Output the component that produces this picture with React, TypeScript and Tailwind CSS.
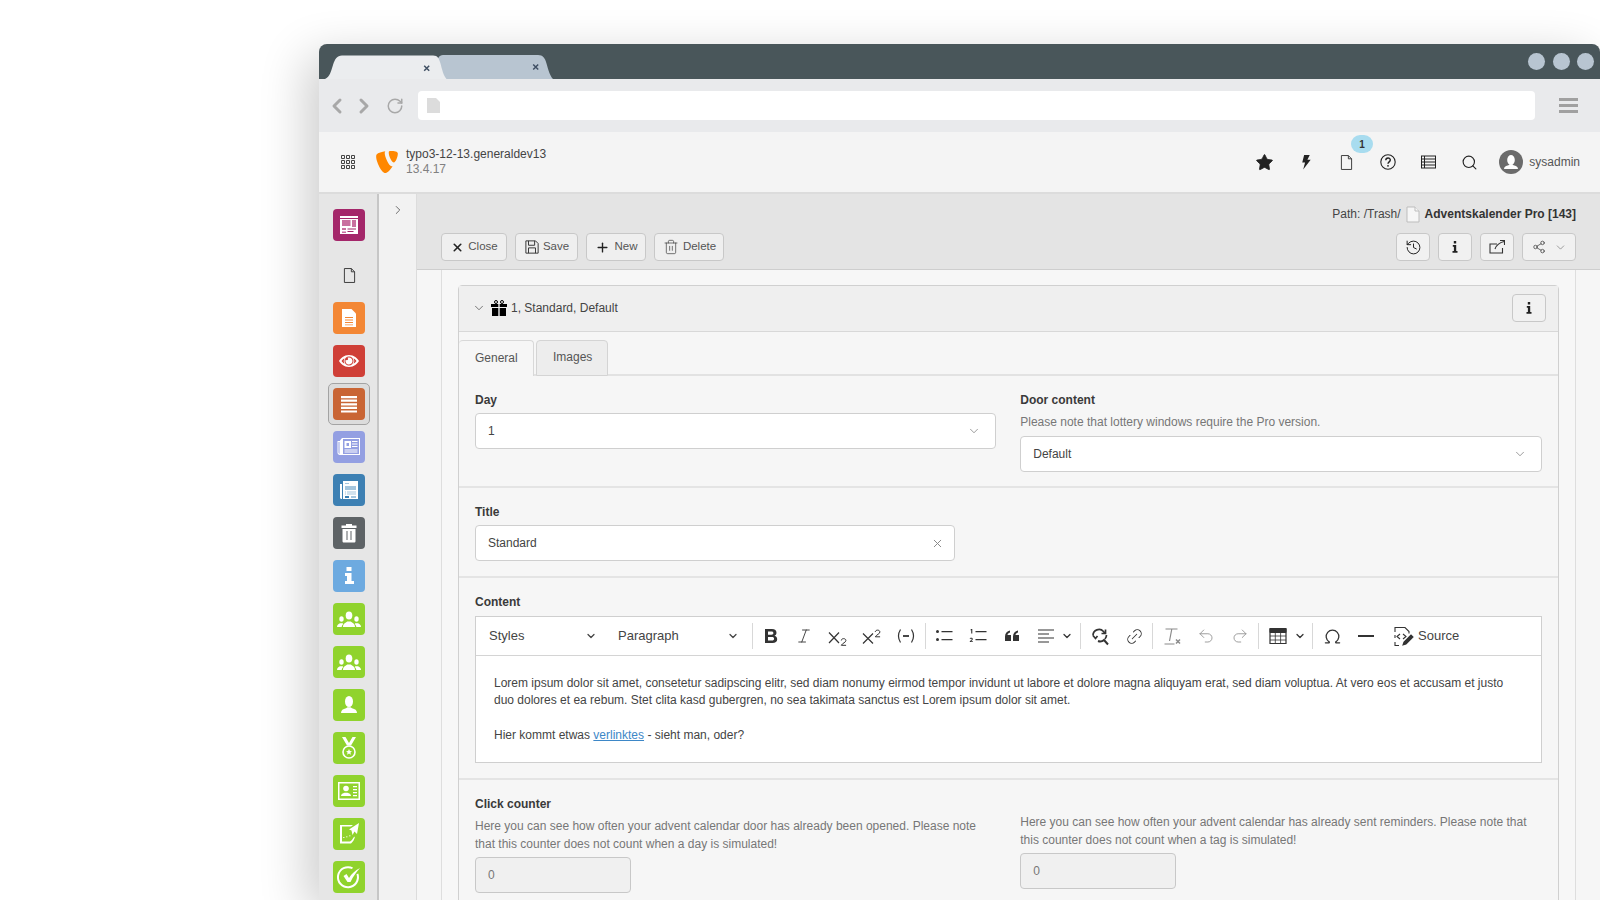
import React from 'react';
import { SiTypo3 } from 'react-icons/si';
import {
  Star, Search, X, Plus, Trash2, History, ChevronDown, ChevronRight, ChevronLeft, RotateCw, Share2,
  Italic, Undo2, Redo2, Omega, Link2,
} from 'lucide-react';

const Doc = ({ className = '', fill = 'none', stroke = 'currentColor' }: { className?: string; fill?: string; stroke?: string }) => (
  <svg viewBox="0 0 14 16" className={className} fill={fill} stroke={stroke} strokeWidth="1">
    <path d="M1.5 .5h7.5l3.5 3.5v11.500h-11z" />
    <path d="M9 .5v3.500h3.500" />
  </svg>
);

const Tile = ({ bg, children }: { bg: string; children: React.ReactNode }) => (
  <div className={`w-8 h-8 rounded-[4px] shrink-0 flex items-center justify-center ${bg}`}>
    <svg viewBox="0 0 32 32" className="w-8 h-8" fill="#fff">{children}</svg>
  </div>
);

const Group = () => (
  <>
    <ellipse cx="16" cy="12.500" rx="3.300" ry="4" />
    <path d="M10 24c0-3.500 2.500-4 4.300-5.500h3.400C19.500 20 22 20.500 22 24z" />
    <ellipse cx="8.500" cy="16" rx="2.200" ry="2.800" />
    <path d="M4 24c0-2.500 1.800-3 3-3.800h2.800l.4 1c-1 .7-1.400 1.700-1.500 2.800z" />
    <ellipse cx="23.500" cy="16" rx="2.200" ry="2.800" />
    <path d="M28 24c0-2.500-1.800-3-3-3.800h-2.800l-.4 1c1 .7 1.400 1.700 1.500 2.800z" />
  </>
);

const ModuleMenu = () => (
  <div className="w-[60px] shrink-0 bg-[#e6e6e6] border-r-2 border-[#c6c6c6] flex flex-col items-center pt-[15px] pl-[2px]">
    <Tile bg="bg-[#a4276a]">
      <path d="M7 7h18v18H7z" />
      <path d="M9 11h8.500v6H9zM19 11h4v7h-4zM9 19h4v2H9zM9 22.500h4V24H9z" fill="#c9709f" />
      <path d="M14.500 19.500h8.500v1h-8.500zM14.500 22h6v1h-6z" fill="#a4276a" />
      <path d="M7 9h18v1H7z" fill="#a4276a" />
    </Tile>
    <div className="h-8 w-8 mt-[18px] flex items-center justify-center">
      <Doc className="w-[13px] h-[15px] text-[#333]" />
    </div>
    <div className="mt-[11px]">
      <Tile bg="bg-[#f38735]">
        <path d="M9 7h9.500L23 11.500V25H9z" />
        <path d="M12 15h8v1h-8zM12 17.500h8v1h-8zM12 20h8v1h-8zM12 22.500h8v.8h-8z" fill="#f38735" />
      </Tile>
    </div>
    <div className="mt-[11px]">
      <Tile bg="bg-[#cf3f37]">
        <path fillRule="evenodd" d="M16 10c5 0 8.500 3.500 10 6-1.500 2.500-5 6-10 6S7.500 18.500 6 16c1.500-2.500 5-6 10-6zm0 1.500a4.500 4.500 0 100 9 4.500 4.500 0 000-9zm-7.500 4.500c.8 1 1.700 2 2.900 2.800a6 6 0 010-5.600c-1.200.8-2.100 1.800-2.900 2.800zm15 0c-.8-1-1.700-2-2.900-2.800a6 6 0 010 5.600c1.200-.8 2.100-1.800 2.900-2.800z" />
        <path d="M16 12.500a3.500 3.500 0 11-3.300 2.300c.6.700 2 .4 2.300-.2.300-.7-.1-1.500-.6-1.800.5-.2 1-.3 1.600-.3z" />
      </Tile>
    </div>
    <div className="mt-[6px] w-[42px] h-[42px] rounded-[5px] border border-[#a3a3a3] bg-[#dcdcdc] flex items-center justify-center">
      <Tile bg="bg-[#c96535]">
        <path d="M8 8h16v2.200H8zM8 11.600h16v2.200H8zM8 15.200h16v2.200H8zM8 18.800h16V21H8zM8 22.400h16v2.200H8z" />
      </Tile>
    </div>
    <div className="mt-[6px]">
      <Tile bg="bg-[#939fe2]">
        <path fillRule="evenodd" d="M9 7h18v17H7c-1.500 0-2.500-1-2.500-2.500V10H7v-.5zm1 1v15h16V8zM5.500 11v10.500c0 .6.400 1.200 1 1.400V11z" />
        <path d="M11.500 10h6.500v7h-6.500zM19 10h5.500v1H19zM19 12.500h5.500v1H19zM19 15h5.500v1H19zM11.500 18.500h13v1h-13zM11.500 20.500h13v1h-13z" />
        <path d="M13.500 12h2.500v3h-2.500z" fill="#939fe2" />
      </Tile>
    </div>
    <div className="mt-[11px]">
      <Tile bg="bg-[#3d80b3]">
        <path d="M10 7h15v18H10zM7 10h2v15c-1 0-2-.5-2-1.500z" />
        <path d="M12 9h4v1h-4zM12 12h11v4H12zM12 17.500h1v1h-1zM14 17.500h9v1h-9zM12 19.500h1v1h-1zM14 19.500h9v1h-9z" fill="#a4c5dd" />
        <path d="M12 22h4v2h-4z" fill="#3d80b3" />
        <path d="M18 22h5v2h-5z" fill="#a4c5dd" />
      </Tile>
    </div>
    <div className="mt-[11px]">
      <Tile bg="bg-[#5e6366]">
        <path d="M13 7h6v1.500h4.500V11h-15V8.500H13z" />
        <path fillRule="evenodd" d="M9.500 12h13v12c0 1-.5 1.500-1.500 1.500H11c-1 0-1.500-.5-1.500-1.500zm4 2v9h1v-9zm4 0v9h1v-9z" />
      </Tile>
    </div>
    <div className="mt-[11px]">
      <Tile bg="bg-[#6daae0]">
        <path d="M13.500 7h5v4h-5zM12 13h6.500v8H21v3H12v-3h2v-5h-2z" />
      </Tile>
    </div>
    <div className="mt-[11px]"><Tile bg="bg-[#90d32d]"><Group /></Tile></div>
    <div className="mt-[11px]"><Tile bg="bg-[#90d32d]"><Group /></Tile></div>
    <div className="mt-[11px]">
      <Tile bg="bg-[#90d32d]">
        <ellipse cx="16" cy="12.500" rx="4" ry="5.500" />
        <path d="M8 24c0-3 2-4 5-4.800l1.500-1h3l1.500 1c3 .8 5 1.800 5 4.800z" />
      </Tile>
    </div>
    <div className="mt-[11px]">
      <Tile bg="bg-[#90d32d]">
        <path d="M9 5h3.500l3.500 6 3.500-6H23l-5 8.500h-4z" />
        <circle cx="16" cy="20" r="6" fill="none" stroke="#fff" strokeWidth="1.600" />
        <path d="M16 17l.9 2 2.100.2-1.600 1.400.5 2.100-1.900-1.100-1.900 1.100.5-2.100-1.600-1.400 2.100-.2z" />
      </Tile>
    </div>
    <div className="mt-[11px]">
      <Tile bg="bg-[#90d32d]">
        <path fillRule="evenodd" d="M5 7h22v18H5zm1.500 1.500v15h19v-15z" />
        <circle cx="13" cy="13.500" r="2.800" />
        <path d="M8 21c0-2 2-2.500 3.500-3.200h3c1.500.7 3.500 1.200 3.500 3.200z" />
        <path d="M20 11h4v1.200h-4zM20 14h4v1.200h-4zM20 17h4v1.200h-4zM20 20h4v1.200h-4z" />
      </Tile>
    </div>
    <div className="mt-[11px]">
      <Tile bg="bg-[#90d32d]">
        <path d="M7 7h13l-2 1.500H9v15h8c1.500-1 2.500-2 3.500-4l1.500-1c-.5 3-2 5-4 7H7z" />
        <path d="M26 5l-2 11-2.500-2.500-2 3.500-1-4.500-2.500-1z" />
        <path d="M10 19h1.500v.8H10zM13 18.500h1.500v.8H13zM16 17.500h1.500v.8H16z" />
      </Tile>
    </div>
    <div className="mt-[11px]">
      <Tile bg="bg-[#90d32d]">
        <path d="M25.300 12.500A11 11 0 1120 6.500l-1 1.600a9 9 0 104.500 5.200z" />
        <path d="M10.500 15l3-2 2.500 4c2.500-4 6-7.500 11-10-3.500 4-7 8.500-9.500 14h-3z" />
      </Tile>
    </div>
  </div>
);

const TopBtn = ({ label, w, children }: { label: string; w: string; children: React.ReactNode }) => (
  <div className={`${w} h-[28px] rounded-[4px] border border-[#c8c8c8] bg-[#efefef] flex items-center justify-center gap-[4px] pl-[1px] text-[11.500px] text-[#555]`}>
    {children}
    <span>{label}</span>
  </div>
);

const IconBtn = ({ w = 'w-[34px]', children }: { w?: string; children: React.ReactNode }) => (
  <div className={`${w} h-[28px] rounded-[4px] border border-[#c8c8c8] bg-[#f1f1f1] flex items-center justify-center`}>
    {children}
  </div>
);

const InfoI = () => (
  <svg viewBox="0 0 16 16" className="w-4 h-4 text-[#222]" fill="currentColor">
    <path d="M6.800 2h2.400v2.400H6.800zM5.800 6h3.400v6h1.300v1.700H5.500V12h1.400V7.700H5.800z" />
  </svg>
);

const Sep = ({ ml }: { ml: string }) => <div className={`w-px h-[26px] bg-[#d8d8d8] shrink-0 ${ml}`} />;

const TB = ({ w = 'w-[34px]', ml = '', children }: { w?: string; ml?: string; children: React.ReactNode }) => (
  <div className={`h-full shrink-0 flex items-center justify-center text-[#333] ${w} ${ml}`}>{children}</div>
);

const Editor = () => (
  <div className="mt-[5px] border border-[#cfcfcf] bg-white h-[147px] w-full">
    <div className="h-[39px] border-b border-[#d4d4d4] flex items-center text-[13px] text-[#444]">
      <div className="w-[129px] h-full flex items-center justify-between pl-[13px] pr-[8px] shrink-0">
        <span>Styles</span><ChevronDown size={12} strokeWidth={2.500} />
      </div>
      <div className="w-[142px] h-full flex items-center justify-between pl-[13px] pr-[8px] shrink-0">
        <span>Paragraph</span><ChevronDown size={12} strokeWidth={2.500} />
      </div>
      <Sep ml="ml-[5px]" />
      <TB w="w-[33px]" ml="ml-[1px]">
        <svg viewBox="0 0 20 20" className="w-5 h-5" fill="currentColor" fillRule="evenodd">
          <path d="M4 3h7c3 0 4.500 1.500 4.500 3.800 0 1.500-.8 2.500-2 3 1.700.5 2.700 1.700 2.700 3.400 0 2.500-1.800 3.800-4.700 3.800H4zm3 2.500v3.300h3.500c1.200 0 1.900-.6 1.900-1.700s-.7-1.600-1.900-1.600zm0 5.500v3.500h4c1.300 0 2.100-.6 2.100-1.800s-.8-1.700-2.100-1.700z" />
        </svg>
      </TB>
      <TB w="w-[33px]"><Italic size={18} strokeWidth={1.200} /></TB>
      <TB w="w-[35px]">
        <svg viewBox="0 0 20 20" className="w-5 h-5" fill="none" stroke="currentColor" strokeWidth="1.200">
          <path d="M1 6.500l10 10.500M11 6.500L1 17" />
          <path d="M13.300 14.500c0-2.500 4.600-2.500 4.600 0 0 2-3.400 2.500-4.600 4.800h4.800" strokeWidth="1" />
        </svg>
      </TB>
      <TB>
        <svg viewBox="0 0 20 20" className="w-5 h-5" fill="none" stroke="currentColor" strokeWidth="1.200">
          <path d="M1 7.500l10 10M11 7.500l-10 10" />
          <path d="M13.300 6c0-2.500 4.600-2.500 4.600 0 0 2-3.400 2.500-4.600 4.800h4.800" strokeWidth="1" />
        </svg>
      </TB>
      <TB>
        <svg viewBox="0 0 20 20" className="w-5 h-5" fill="none" stroke="currentColor" strokeWidth="1.200">
          <path d="M4.500 3.500c-2.500 4-2.500 9 0 13M15.500 3.500c2.500 4 2.500 9 0 13" />
          <path d="M7 10h6" strokeWidth="1.800" />
        </svg>
      </TB>
      <Sep ml="ml-[2px]" />
      <TB ml="ml-[1px]">
        <svg viewBox="0 0 20 20" className="w-5 h-5" fill="currentColor">
          <circle cx="3.500" cy="5.500" r="1.500" /><circle cx="3.500" cy="13.500" r="1.500" />
          <path d="M7.500 5h11v1.200h-11zM7.500 13h11v1.200h-11z" />
        </svg>
      </TB>
      <TB>
        <svg viewBox="0 0 20 20" className="w-5 h-5" fill="currentColor">
          <path d="M3 3h1.300v4.500H3.200V4.300H2.300zM1.800 12.200c1-.6 3-.6 3 .8 0 1-1 1.500-1.700 2.200h1.800v.9H1.800v-.8l1.900-1.900c.4-.6-.9-.8-1.800-.3z" />
          <path d="M7.500 5h11v1.200h-11zM7.500 13h11v1.200h-11z" />
        </svg>
      </TB>
      <TB>
        <svg viewBox="0 0 20 20" className="w-5 h-5" fill="currentColor">
          <path d="M3 10.500C3 7 5 5 8 4.500v2c-1.500.4-2.300 1.200-2.500 2.500H9v6H3zM11 10.500C11 7 13 5 16 4.500v2c-1.500.4-2.300 1.200-2.500 2.500H17v6h-6z" />
        </svg>
      </TB>
      <TB>
        <svg viewBox="0 0 20 20" className="w-5 h-5" fill="currentColor">
          <path d="M2 3.500h16v1.100H2zM2 7.500h11v1.100H2zM2 11.500h16v1.100H2zM2 15.500h11v1.100H2z" />
        </svg>
      </TB>
      <TB w="w-[8px]"><ChevronDown size={12} strokeWidth={2.500} className="shrink-0" /></TB>
      <Sep ml="ml-[9px]" />
      <TB ml="ml-[2px]">
        <svg viewBox="0 0 20 20" className="w-5 h-5" fill="none" stroke="currentColor" strokeWidth="1.700">
          <path d="M3 9.500a6 6 0 0110.500-4l1.500 2M16.500 9a6 6 0 01-1.500 4" />
          <path d="M15.500 3.500v4h-4" />
          <path d="M3 9.500l2.500 3 2-2.500" />
          <path d="M8 15a6 6 0 006-1l4 4.500" strokeWidth="2" />
        </svg>
      </TB>
      <TB><Link2 size={19} strokeWidth={1.200} className="-rotate-45" /></TB>
      <Sep ml="ml-[1px]" />
      <TB ml="ml-[2px]">
        <svg viewBox="0 0 20 20" className="w-5 h-5 text-[#8a8a8a]" fill="none" stroke="currentColor" strokeWidth="1.200">
          <path d="M3.500 3h12M9.800 3L7.500 15M2.500 18h10" />
          <path d="M14 13.500l4 4M18 13.500l-4 4" strokeWidth="1.500" />
        </svg>
      </TB>
      <TB><Undo2 size={18} strokeWidth={1.100} className="text-[#8a8a8a]" /></TB>
      <TB><Redo2 size={18} strokeWidth={1.100} className="text-[#8a8a8a]" /></TB>
      <Sep ml="ml-[1px]" />
      <TB ml="ml-[2px]">
        <svg viewBox="0 0 20 20" className="w-5 h-5" fill="none" stroke="currentColor">
          <path d="M2 2.500h16v15H2z" strokeWidth="1.200" />
          <path d="M2 3h16v3.500H2z" fill="currentColor" />
          <path d="M2 10h16M2 14h16M7.300 6v11M12.600 6v11" strokeWidth=".8" />
        </svg>
      </TB>
      <TB w="w-[10px]"><ChevronDown size={12} strokeWidth={2.500} className="shrink-0" /></TB>
      <Sep ml="ml-[7px]" />
      <TB ml="ml-[2px]"><Omega size={19} strokeWidth={1.600} /></TB>
      <TB><div className="w-[16px] h-[2px] bg-[#333]" /></TB>
      <TB w="w-[21px]" ml="ml-[10px]">
        <svg viewBox="0 0 21 21" className="w-[21px] h-[21px]" fill="none" stroke="currentColor" strokeWidth="1.100">
          <path d="M2 6V1.500h10l4 4v2M2 16v3.500h4M2 9v3" />
          <path d="M7 8l-3 2.500L7 13M10 8l3 2.500L10 13" />
          <path d="M10 19l1-3 7-7 2 2-7 7z" fill="currentColor" />
        </svg>
      </TB>
      <span className="ml-[4px]">Source</span>
    </div>
    <div className="pl-[18px] pt-[19px] text-[12px] leading-[17.400px] text-[#444]">
      <p>
        Lorem ipsum dolor sit amet, consetetur sadipscing elitr, sed diam nonumy eirmod tempor invidunt ut labore et dolore magna aliquyam erat, sed diam voluptua. At vero eos et accusam et justo<br />
        duo dolores et ea rebum. Stet clita kasd gubergren, no sea takimata sanctus est Lorem ipsum dolor sit amet.
      </p>
      <p className="mt-[16.800px]">
        Hier kommt etwas <span className="text-[#3d87c7] underline">verlinktes</span> - sieht man, oder?
      </p>
    </div>
  </div>
);

const Label = ({ children }: { children: React.ReactNode }) => (
  <div className="h-[18px] leading-[18px] text-[12px] font-bold text-[#3a3a3a]">{children}</div>
);

const Select = ({ value, mt }: { value: string; mt: string }) => (
  <div className={`h-[36px] rounded-[4px] border border-[#cfcfcf] bg-white flex items-center justify-between pl-[12px] pr-[14px] text-[12px] text-[#444] ${mt}`}>
    <span>{value}</span>
    <ChevronDown size={14} strokeWidth={1} className="text-[#555]" />
  </div>
);

const Counter = () => (
  <div className="mt-[4px] w-[156px] h-[36px] rounded-[4px] border border-[#c8c8c8] bg-[#f0f0f0] flex items-center pl-[12px] text-[12px] text-[#777]">0</div>
);

export default function App() {
  return (
    <div className="w-[1600px] h-[900px] overflow-hidden bg-white pl-[319px] pt-[44px] font-['Liberation_Sans',Arial,sans-serif]">
      <div className="h-[856px] flex flex-col rounded-t-[8px] bg-[#e6e6e6] shadow-[-12px_12px_48px_rgba(0,0,0,0.2)]">
        {/* tab strip */}
        <div className="h-[35px] shrink-0 bg-[#49565a] rounded-t-[8px] flex items-end pr-[6px] overflow-hidden">
          <svg viewBox="0 0 240 24" className="w-[240px] h-[24px] ml-[6px] shrink-0">
            <path d="M113 24h115c-3-3-5-10-6.500-15.500C220 3 218 0 213 0H118c-4 0-6 4-7 9z" fill="#b8c5d1" />
            <path d="M0 24c5-2 6-8 8-14 2-6 4-9.500 9-9.500h91c5 0 6 3 7.500 8 1.500 6 3 12 6 15.500z" fill="#ebedef" />
            <path d="M99.200 10.800l5 5M104.200 10.800l-5 5" stroke="#3f4f63" strokeWidth="1.500" />
            <path d="M208.200 9.500l5 5M213.200 9.500l-5 5" stroke="#3f4f63" strokeWidth="1.500" />
          </svg>
          <div className="ml-auto self-center flex gap-[7.500px]">
            <div className="w-[17px] h-[17px] rounded-full bg-[#b8c5d1]" />
            <div className="w-[17px] h-[17px] rounded-full bg-[#b8c5d1]" />
            <div className="w-[17px] h-[17px] rounded-full bg-[#b8c5d1]" />
          </div>
        </div>
        {/* browser bar */}
        <div className="h-[53px] shrink-0 bg-[#e9eaec] flex items-center">
          <ChevronLeft size={24} strokeWidth={3} className="text-[#a8a8a8] ml-[6px] shrink-0" />
          <ChevronRight size={24} strokeWidth={3} className="text-[#a8a8a8] ml-[3px] shrink-0" />
          <RotateCw size={18} strokeWidth={2} className="text-[#a8a8a8] ml-[10px] shrink-0" />
          <div className="ml-[14px] h-[29px] w-[1117px] rounded-[4px] bg-white flex items-center pl-[9px] shrink-0">
            <svg viewBox="0 0 13 15" className="w-[13px] h-[15px]" fill="#dcdcdc">
              <path d="M0 0h9l4 4v11H0z" />
            </svg>
          </div>
          <div className="ml-[24px] w-[19px] flex flex-col gap-[3px] shrink-0">
            <div className="h-[3px] bg-[#a0a0a0]" /><div className="h-[3px] bg-[#a0a0a0]" /><div className="h-[3px] bg-[#a0a0a0]" />
          </div>
        </div>
        {/* typo3 top bar */}
        <div className="h-[62px] shrink-0 bg-[#f4f4f4] border-b-2 border-[#dcdcdc] flex items-center relative">
          <svg viewBox="0 0 14 14" className="w-[14px] h-[14px] ml-[22px] shrink-0" fill="none" stroke="#444" strokeWidth="1">
            <path d="M.5.500h3v3h-3zM5.500.500h3v3h-3zM10.500.500h3v3h-3zM.5 5.500h3v3h-3zM5.500 5.500h3v3h-3zM10.500 5.500h3v3h-3zM.5 10.500h3v3h-3zM5.500 10.500h3v3h-3zM10.500 10.500h3v3h-3z" />
          </svg>
          <SiTypo3 size={22} className="text-[#ff8700] ml-[21px] shrink-0" />
          <div className="ml-[8px] text-[12px] leading-[15px]">
            <div className="text-[#444]">typo3-12-13.generaldev13</div>
            <div className="text-[#808080]">13.4.17</div>
          </div>
          <div className="ml-auto flex items-center text-[#222]">
            <div className="w-[41px] flex justify-center"><Star size={19} fill="currentColor" strokeWidth={1} /></div>
            <div className="w-[41px] flex justify-center">
              <svg viewBox="0 0 10 16" className="w-[10px] h-[15px]" fill="currentColor"><path d="M3 0h6L6.500 5H10L2 15.500 4 8H1z" /></svg>
            </div>
            <div className="w-[41px] flex justify-center"><Doc className="w-[13px] h-[15px] text-[#333]" /></div>
            <div className="w-[41px] flex justify-center">
              <svg viewBox="0 0 16 16" className="w-4 h-4" fill="none" stroke="currentColor">
                <circle cx="8" cy="8" r="7.200" strokeWidth="1.100" />
                <path d="M5.800 6.200C5.800 3.300 10.300 3.300 10.300 6c0 1.800-2.300 1.900-2.300 3.700" strokeWidth="1.400" />
                <circle cx="8" cy="11.800" r=".9" fill="currentColor" stroke="none" />
              </svg>
            </div>
            <div className="w-[41px] flex justify-center">
              <svg viewBox="0 0 15 14" className="w-[15px] h-[14px]" fill="currentColor">
                <path fillRule="evenodd" d="M0 .5h15v13H0zm1 1v2h2v-2zm3 0v2h10v-2zM1 4.500v2h2v-2zm3 0v2h10v-2zm-3 3v2h2v-2zm3 0v2h10v-2zm-3 3v2h2v-2zm3 0v2h10v-2z" />
              </svg>
            </div>
            <div className="w-[41px] flex justify-center"><Search size={17} strokeWidth={1.600} /></div>
            <div className="w-[24px] h-[24px] rounded-full bg-[#6b6b6b] ml-[9px] flex items-center justify-center overflow-hidden shrink-0">
              <svg viewBox="0 0 24 24" className="w-6 h-6" fill="#fff">
                <ellipse cx="12" cy="10" rx="3.800" ry="5" />
                <path d="M5 19c0-2.500 2-3 4.500-3.700l1-1h3l1 1C17 16 19 16.500 19 19z" />
              </svg>
            </div>
            <span className="ml-[6px] mr-[20px] text-[12px] text-[#555]">sysadmin</span>
          </div>
          <div className="absolute right-[227px] top-[3px] w-[22px] h-[18px] rounded-full bg-[#a8dcef] text-[10px] font-bold text-[#333] flex items-center justify-center">1</div>
        </div>
        {/* main */}
        <div className="flex-1 min-h-0 flex overflow-hidden">
          <ModuleMenu />
          <div className="w-[38px] shrink-0 bg-[#f2f2f2] border-r border-[#dcdcdc] flex justify-center pt-[9px]">
            <ChevronRight size={14} strokeWidth={1.300} className="text-[#444]" />
          </div>
          <div className="flex-1 min-w-0 flex flex-col">
            {/* docheader */}
            <div className="h-[76px] shrink-0 bg-[#e4e4e4] border-b border-[#cecece] px-[24px]">
              <div className="h-[39px] flex items-center justify-end text-[12px] text-[#444] pt-[1px]">
                <span>Path: /Trash/</span>
                <svg viewBox="0 0 14 16" className="w-[14px] h-[17px] mx-[5px]" fill="#f6f6f6" stroke="#bdbdbd" strokeWidth="1">
                  <path d="M1 .5h8l4 4V15.500H1z" /><path d="M9 .5v4h4" />
                </svg>
                <span className="font-bold text-[#333]">Adventskalender Pro [143]</span>
              </div>
              <div className="flex items-center">
                <TopBtn label="Close" w="w-[66px]"><X size={13} strokeWidth={3} className="text-[#222]" /></TopBtn>
                <div className="ml-[8px]">
                  <TopBtn label="Save" w="w-[63px]">
                    <svg viewBox="0 0 16 16" className="w-[14px] h-[14px] text-[#333]" fill="none" stroke="currentColor" strokeWidth="1.100">
                      <path d="M1 1h11l3 3v11H1z" /><path d="M4 1v5h7V1M4 15v-6h8v6" />
                    </svg>
                  </TopBtn>
                </div>
                <div className="ml-[8px]"><TopBtn label="New" w="w-[60px]"><Plus size={15} strokeWidth={2.200} className="text-[#222]" /></TopBtn></div>
                <div className="ml-[8px]"><TopBtn label="Delete" w="w-[70px]"><Trash2 size={16} strokeWidth={1} className="text-[#333]" /></TopBtn></div>
                <div className="ml-auto flex gap-[8px]">
                  <IconBtn><History size={17} strokeWidth={1.400} className="text-[#222]" /></IconBtn>
                  <IconBtn><InfoI /></IconBtn>
                  <IconBtn>
                    <svg viewBox="0 0 16 16" className="w-[16px] h-[16px] text-[#333]" fill="none" stroke="currentColor" strokeWidth="1.100">
                      <path d="M13.500 9v5H1V5h7" /><path d="M6 10c1-3 3-6 9-7.500M11 1.500h4.500V6" />
                    </svg>
                  </IconBtn>
                  <IconBtn w="w-[54px]">
                    <Share2 size={14} strokeWidth={1.200} className="text-[#333]" />
                    <ChevronDown size={13} strokeWidth={1} className="text-[#555] ml-[8px]" />
                  </IconBtn>
                </div>
              </div>
            </div>
            {/* body */}
            <div className="flex-1 min-h-0 bg-[#f6f6f6] pl-[24px] pr-[24px]">
              <div className="h-full border-l border-r border-[#dedede] bg-[#f7f7f7] pl-[16px] pr-[16px] pt-[15px]">
                <div className="rounded-t-[4px] border border-[#d0d0d0] bg-[#f6f6f6] h-[700px]">
                  <div className="h-[46px] bg-[#efefef] border-b border-[#d8d8d8] flex items-center pl-[13px] pr-[12px] pb-[1px] text-[12px] text-[#444]">
                    <ChevronDown size={14} strokeWidth={1.200} />
                    <svg viewBox="0 0 16 16" className="w-4 h-4 ml-[5px] text-black" fill="currentColor">
                      <path d="M0 4h7.300v3H0zM8.700 4H16v3H8.700zM1 8h6.300v8H1zM8.700 8H15v8H8.700z" />
                      <circle cx="5" cy="2" r="1.500" fill="none" stroke="currentColor" />
                      <circle cx="11" cy="2" r="1.500" fill="none" stroke="currentColor" />
                    </svg>
                    <span className="ml-[4px]">1, Standard, Default</span>
                    <div className="ml-auto"><IconBtn><InfoI /></IconBtn></div>
                  </div>
                  <div className="h-[44px] border-b-2 border-[#e2e2e2] flex items-end text-[12px] text-[#555]">
                    <div className="w-[75px] h-[36px] -mb-[2px] bg-[#f6f6f6] rounded-t-[4px] border-t border-r border-[#d8d8d8] flex items-center pl-[16px] pb-[2px]">General</div>
                    <div className="ml-[2px] w-[72px] h-[36px] -mb-[2px] bg-[#ededed] rounded-t-[4px] border border-[#d4d4d4] flex items-center pl-[16px] pb-[2px]">Images</div>
                  </div>
                  <div className="h-[112px] border-b-2 border-[#e4e4e4] pl-[16px] pr-[16.500px] pt-[15px] grid grid-cols-2 gap-x-[24px] items-start">
                    <div>
                      <Label>Day</Label>
                      <Select value="1" mt="mt-[4px]" />
                    </div>
                    <div>
                      <Label>Door content</Label>
                      <div className="mt-[4px] h-[18px] leading-[18px] text-[12px] text-[#777]">Please note that lottery windows require the Pro version.</div>
                      <Select value="Default" mt="mt-[5px]" />
                    </div>
                  </div>
                  <div className="h-[90px] border-b-2 border-[#e4e4e4] pl-[16px] pt-[15px]">
                    <Label>Title</Label>
                    <div className="mt-[4px] w-[480px] h-[36px] rounded-[4px] border border-[#cfcfcf] bg-white flex items-center justify-between pl-[12px] pr-[10px] text-[12px] text-[#444]">
                      <span>Standard</span>
                      <X size={13} strokeWidth={1.800} className="text-[#888]" />
                    </div>
                  </div>
                  <div className="h-[202px] border-b-2 border-[#e4e4e4] pl-[16px] pr-[16px] pt-[15px]">
                    <Label>Content</Label>
                    <Editor />
                  </div>
                  <div className="pl-[16px] pr-[16.500px] pt-[15px] grid grid-cols-2 gap-x-[24px] items-start text-[12px]">
                    <div>
                      <Label>Click counter</Label>
                      <div className="mt-[4px] leading-[18px] text-[#777]">
                        Here you can see how often your advent calendar door has already been opened. Please note<br />
                        that this counter does not count when a day is simulated!
                      </div>
                      <Counter />
                    </div>
                    <div className="pt-[18px]">
                      <div className="leading-[18px] text-[#777]">
                        Here you can see how often your advent calendar has already sent reminders. Please note that<br />
                        this counter does not count when a tag is simulated!
                      </div>
                      <Counter />
                    </div>
                  </div>
                </div>
              </div>
            </div>
          </div>
        </div>
      </div>
    </div>
  );
}
